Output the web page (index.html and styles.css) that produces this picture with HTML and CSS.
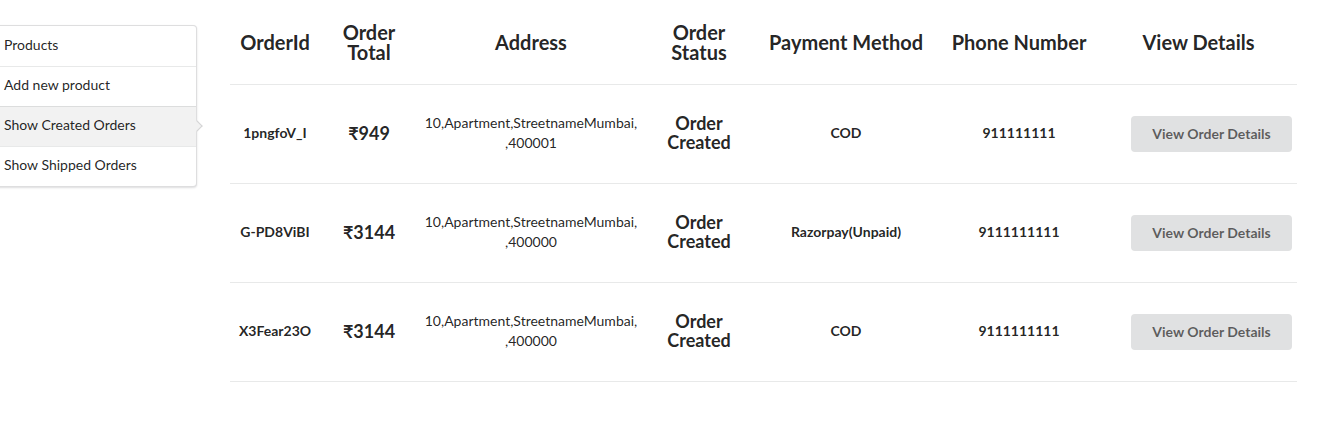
FILE: index.html
```html
<!DOCTYPE html>
<html>
<head>
<meta charset="utf-8">
<link rel="stylesheet" href="styles.css">
</head>
<body>
<div class="page">
  <nav class="menu">
    <a class="item">Products</a>
    <a class="item">Add new product</a>
    <a class="item active">Show Created Orders</a>
    <a class="item">Show Shipped Orders</a>
  </nav>
  <table class="orders">
    <colgroup>
      <col class="c1"><col class="c2"><col class="c3"><col class="c4"><col class="c5"><col class="c6"><col class="c7">
    </colgroup>
    <thead>
      <tr>
        <th>OrderId</th>
        <th>Order<br>Total</th>
        <th>Address</th>
        <th>Order<br>Status</th>
        <th>Payment Method</th>
        <th>Phone Number</th>
        <th>View Details</th>
      </tr>
    </thead>
    <tbody>
      <tr>
        <td class="sm">1pngfoV_I</td>
        <td class="lg">₹949</td>
        <td class="addr">10,Apartment,StreetnameMumbai,<br>,400001</td>
        <td class="lg">Order<br>Created</td>
        <td class="sm">COD</td>
        <td class="sm">911111111</td>
        <td class="act"><button class="btn">View Order Details</button></td>
      </tr>
      <tr>
        <td class="sm">G-PD8ViBI</td>
        <td class="lg">₹3144</td>
        <td class="addr">10,Apartment,StreetnameMumbai,<br>,400000</td>
        <td class="lg">Order<br>Created</td>
        <td class="sm">Razorpay(Unpaid)</td>
        <td class="sm">9111111111</td>
        <td class="act"><button class="btn">View Order Details</button></td>
      </tr>
      <tr>
        <td class="sm">X3Fear23O</td>
        <td class="lg">₹3144</td>
        <td class="addr">10,Apartment,StreetnameMumbai,<br>,400000</td>
        <td class="lg">Order<br>Created</td>
        <td class="sm">COD</td>
        <td class="sm">9111111111</td>
        <td class="act"><button class="btn">View Order Details</button></td>
      </tr>
    </tbody>
  </table>
</div>
</body>
</html>
```
FILE: styles.css
```css
html, body {
  margin: 0;
  padding: 0;
  background: #ffffff;
}
body {
  font-family: Lato, "Noto Sans", "DejaVu Sans", sans-serif;
  font-size: 14px;
  color: rgba(0, 0, 0, 0.87);
  overflow: hidden;
}
.page {
  display: flex;
  align-items: flex-start;
  margin-left: -13px;
}
.menu {
  display: flex;
  flex-direction: column;
  width: 210px;
  box-sizing: border-box;
  margin-top: 25px;
  border: 1px solid rgba(34, 36, 38, 0.15);
  border-radius: 4px;
  box-shadow: 0 1px 2px 0 rgba(34, 36, 38, 0.15);
  background: #fff;
  flex-shrink: 0;
}
.item {
  position: relative;
  display: block;
  padding: 12px 16px 14px;
  line-height: 14px;
  font-size: 14px;
  color: rgba(0, 0, 0, 0.87);
}
.item::before {
  content: "";
  position: absolute;
  top: 0;
  left: 0;
  width: 100%;
  height: 1px;
  background: rgba(34, 36, 38, 0.1);
}
.item:first-child::before {
  display: none;
}
.item.active {
  background: rgba(0, 0, 0, 0.05);
}
.item.active::after {
  content: "";
  position: absolute;
  top: 50%;
  right: -1px;
  width: 8px;
  height: 8px;
  background: #f2f2f2;
  border-top: 1px solid #d4d4d5;
  border-right: 1px solid #d4d4d5;
  transform: translate(50%, -50%) rotate(45deg);
  box-sizing: border-box;
  z-index: 2;
}
.orders {
  margin-left: 33px;
  width: 1067px;
  border-collapse: collapse;
  table-layout: fixed;
}
.c1 { width: 90px; }
.c2 { width: 98px; }
.c3 { width: 226px; }
.c4 { width: 110px; }
.c5 { width: 184px; }
.c6 { width: 162px; }
.c7 { width: 197px; }
.orders th {
  height: 84px;
  padding: 0;
  font-size: 20px;
  line-height: 20px;
  font-weight: 700;
  text-align: center;
  vertical-align: middle;
  border-bottom: 1px solid rgba(34, 36, 38, 0.1);
  color: rgba(0, 0, 0, 0.87);
}
.orders td {
  height: 96px;
  padding: 0 0 2px 0;
  text-align: center;
  vertical-align: middle;
  border-bottom: 1px solid rgba(34, 36, 38, 0.1);
}
.orders td.sm {
  font-size: 14px;
  font-weight: 700;
  height: 94px;
  padding-bottom: 4px;
}
.orders td.lg {
  font-size: 18px;
  line-height: 19px;
  font-weight: 700;
}
.orders td.addr {
  font-size: 14px;
  line-height: 20px;
}
.orders td.act {
  height: 98px;
  padding: 0 5px 0 0;
  text-align: right;
}
.btn {
  font-family: Lato, "Noto Sans", sans-serif;
  font-size: 14px;
  font-weight: 700;
  line-height: 14px;
  padding: 11px 21px;
  width: 161px;
  border: none;
  border-radius: 4px;
  background: #e0e1e2;
  color: rgba(0, 0, 0, 0.6);
  cursor: pointer;
}
```
